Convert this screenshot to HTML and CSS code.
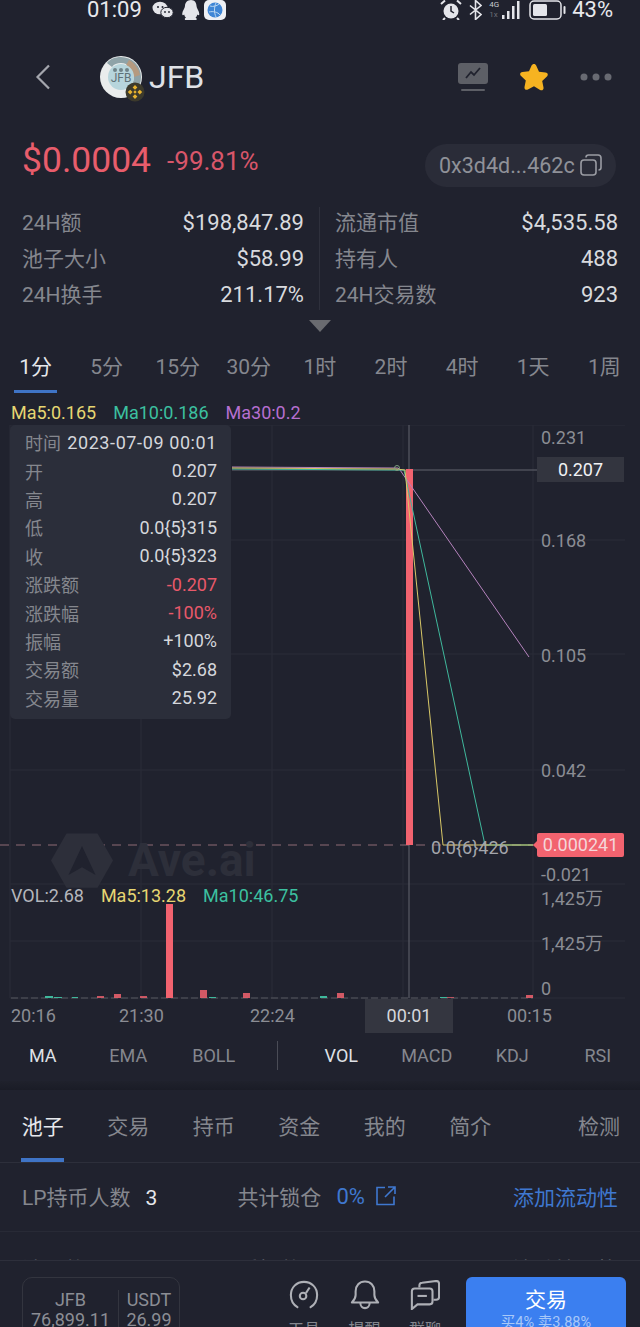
FILE: index.html
```html
<!DOCTYPE html>
<html lang="zh">
<head>
<meta charset="utf-8">
<title>JFB</title>
<link rel="stylesheet" href="styles.css">
</head>
<body>
<div class="page">
  <header class="status">
    <div class="status-left">
      <span class="clock">01:09</span>
      <svg class="st-wechat" width="22" height="18" viewBox="0 0 22 18"><ellipse cx="8" cy="7" rx="7.500" ry="6.300" fill="#e4e5ea"/><ellipse cx="15" cy="11.500" rx="6.200" ry="5.200" fill="#e4e5ea" stroke="#20222e"/><circle cx="6" cy="6" r="1" fill="#20222e"/><circle cx="10.500" cy="6" r="1" fill="#20222e"/><circle cx="13" cy="11" r=".9" fill="#20222e"/><circle cx="17" cy="11" r=".9" fill="#20222e"/></svg>
      <svg class="st-qq" width="22" height="20" viewBox="0 0 22 20"><path d="M11 0c3.800 0 5.500 2.800 5.500 6 0 2 2.800 5 2.800 8 0 1.500-1 1.500-2 .5-.3 1.500-1 2.500-1.800 3 1 .5 1.500 1 1 2.500H5c-.5-1.500 0-2 1-2.500-.8-.5-1.500-1.500-1.800-3-1 1-2 1-2-.5 0-3 2.800-6 2.800-8C5 2.800 7.200 0 11 0z" fill="#e4e5ea"/></svg>
      <svg class="st-globe" width="22" height="20" viewBox="0 0 22 20"><rect width="22" height="20" rx="5" fill="#eef0f4"/><circle cx="11" cy="10" r="7.500" fill="#3f86d6"/><path d="M6 6c3 1 7 0 9-2M5 12c4-1 9 0 11 3M12 3c-2 4-2 10 0 14" stroke="#bcd8f2" fill="none"/></svg>
    </div>
    <div class="status-right">
      <svg class="st-alarm" width="22" height="20" viewBox="0 0 22 20"><circle cx="11" cy="11" r="7.500" fill="#e4e5ea"/><path d="M11 6v5l3 2" stroke="#20222e" stroke-width="1.500" fill="none"/><path d="M1 4l4-3.500M21 4l-4-3.500M5 18l-2 2M17 18l2 2" stroke="#e4e5ea" stroke-width="2"/></svg>
      <svg class="st-bt" width="13" height="20" viewBox="0 0 13 20"><path d="M1 5.500l11 9-5.500 5V.5l5.500 5-11 9" stroke="#e4e5ea" stroke-width="1.600" fill="none"/></svg>
      <div class="net"><span class="net-top">4G</span><span class="net-low">1x</span></div>
      <svg class="st-bars" width="18" height="20" viewBox="0 0 18 20"><g fill="#e4e5ea"><rect x="0" y="15" width="2.500" height="4"/><rect x="5" y="11" width="2.500" height="8"/><rect x="10" y="6" width="2.500" height="13"/><rect x="15" y="1" width="2.500" height="18"/></g></svg>
      <svg class="st-batt" width="37" height="20" viewBox="0 0 37 20"><rect x="1" y="1" width="31" height="18" rx="4" fill="none" stroke="#e4e5ea" stroke-width="1.500"/><rect x="4" y="4" width="14" height="12" rx="1.500" fill="#e4e5ea"/><rect x="34.500" y="6" width="2" height="8" rx="1" fill="#e4e5ea"/></svg>
      <span class="clock">43%</span>
    </div>
  </header>

  <nav class="nav">
    <svg class="back" width="16" height="26" viewBox="0 0 16 26"><path d="M14 1.500L2.500 13 14 24.500" fill="none" stroke="#a4a6ad" stroke-width="2.200"/></svg>
    <div class="logo">
      <svg width="44" height="44" viewBox="0 0 44 44"><circle cx="22" cy="22" r="21" fill="#e9ecec"/><path d="M22 2a20 20 0 0 1 20 20c0 6-2 11-6 15l-5-6c3-3 4-6 4-10 0-8-6-13-13-13-4 0-7 1-9 4l-5-4c3-4 8-6 14-6z" fill="#8fa3a8"/><path d="M30 5c6 3 10 9 11 15l-6 2c-1-5-3-9-8-12z" fill="#b59a80"/><circle cx="22" cy="22" r="13" fill="#b7d5dc"/><text class="logo-text" x="22" y="27" text-anchor="middle">JFB</text><g fill="#6f8288"><circle cx="16" cy="15" r="2"/><circle cx="22" cy="15" r="2"/><circle cx="28" cy="15" r="2"/></g></svg>
      <svg class="chain" width="20" height="20" viewBox="0 0 20 20"><circle cx="10" cy="10" r="9.500" fill="#3c3a2c"/><path d="M10 3l2.400 2.400-2.400 2.400-2.400-2.400zM5.200 7.800L7.600 10l-2.400 2.400L2.800 10zM14.800 7.800l2.400 2.200-2.400 2.400-2.400-2.400zM10 12.200l2.400 2.400L10 17l-2.400-2.400zM10 8.300l1.700 1.700-1.700 1.700L8.300 10z" fill="#e8b32e"/></svg>
    </div>
    <span class="symbol">JFB</span>
    <div class="nav-actions">
      <svg width="30" height="30" viewBox="0 0 30 30"><rect x="0" y="1" width="30" height="21" rx="3" fill="#5d5f66"/><path d="M8 16l5-6 3 3 6-7" fill="none" stroke="#20222e" stroke-width="1.800"/><rect x="3" y="27" width="24" height="2" rx="1" fill="#5d5f66"/></svg>
      <svg width="32" height="30" viewBox="0 0 32 30"><path d="M16 2c1 0 1.800.6 2.300 1.700l2.700 6 6.500.8c2.500.3 3 2.500 1.400 4l-4.700 4.400 1.300 6.500c.4 2.300-1.500 3.500-3.400 2.500L16 24.200l-6.100 3.300c-1.900 1-3.800-.2-3.400-2.500l1.300-6.500-4.700-4.400c-1.600-1.500-1.100-3.700 1.400-4l6.500-.8 2.700-6C14.200 2.600 15 2 16 2z" fill="#f6b321"/></svg>
      <svg width="32" height="8" viewBox="0 0 32 8"><g fill="#686a72"><circle cx="4" cy="4" r="3.500"/><circle cx="16" cy="4" r="3.500"/><circle cx="28" cy="4" r="3.500"/></g></svg>
    </div>
  </nav>

  <section class="price-row">
    <span class="price">$0.0004</span>
    <span class="change">-99.81%</span>
    <div class="address">
      <span>0x3d4d...462c</span>
      <svg width="22" height="22" viewBox="0 0 22 22"><rect x="1" y="6" width="15" height="15" rx="3" fill="#2a2c38" stroke="#9a9ca3" stroke-width="1.600"/><path d="M6 3.500C6 2 7 1 8.500 1H18c1.700 0 3 1.300 3 3v9.500c0 1.500-1 2.500-2.500 2.500" fill="none" stroke="#9a9ca3" stroke-width="1.600"/></svg>
    </div>
  </section>

  <section class="stats">
    <div class="stats-col">
      <div class="stat"><span>24H额</span><b>$198,847.89</b></div>
      <div class="stat"><span>池子大小</span><b>$58.99</b></div>
      <div class="stat"><span>24H换手</span><b>211.17%</b></div>
    </div>
    <div class="stats-col stats-col-right">
      <div class="stat"><span>流通市值</span><b>$4,535.58</b></div>
      <div class="stat"><span>持有人</span><b>488</b></div>
      <div class="stat"><span>24H交易数</span><b>923</b></div>
    </div>
  </section>
  <div class="fold"></div>

  <div class="frames">
    <span class="frame frame-on">1分</span><span class="frame">5分</span><span class="frame">15分</span><span class="frame">30分</span><span class="frame">1时</span><span class="frame">2时</span><span class="frame">4时</span><span class="frame">1天</span><span class="frame">1周</span>
  </div>

  <div class="legend">
    <span class="c-yellow">Ma5:0.165</span>
    <span class="c-green">Ma10:0.186</span>
    <span class="c-purple">Ma30:0.2</span>
  </div>

  <div class="chart">
    <svg class="plot" width="640" height="610" viewBox="0 425 640 610">
      <!-- grid -->
      <g stroke="#2b2d39" stroke-width="1" fill="none">
        <path d="M10 425H625M10 540H625M10 654H625M10 770H625M10 884H625M10 941H625M10 998H625"/>
        <path d="M10 425V998M141 425V998M272 425V998M403 425V998M533 425V998"/>
      </g>
      <!-- crosshair and last price -->
      <path d="M409 425V998M232 470H537" stroke="#63656e" stroke-width="1" fill="none"/>
      <path d="M0 845H537" stroke="#8e6a75" stroke-width="1" stroke-dasharray="9 7" fill="none"/>
      <!-- candle -->
      <rect x="406" y="469" width="7" height="376" fill="#f2636f"/>
      <!-- moving averages -->
      <path d="M232 467L398 468L400 470L529 657" stroke="#b583bd" fill="none"/>
      <path d="M232 469L394 470L404 470L485 845L533 845" stroke="#3fb89c" fill="none"/>
      <path d="M232 468L396 469L405 470L443 845L533 845" stroke="#d8c868" fill="none"/>
      <circle cx="397" cy="468" r="2.500" fill="none" stroke="#7d9d80"/>
      <!-- volume -->
      <path d="M11 998H533" stroke="#565861" stroke-width="1" stroke-dasharray="7 3" fill="none"/>
      <g fill="#f2636f">
        <rect x="166" y="904" width="7" height="94"/>
        <rect x="97" y="996" width="7" height="2" opacity=".8"/>
        <rect x="114" y="994" width="7" height="4" opacity=".85"/>
        <rect x="140" y="996" width="7" height="2" opacity=".8"/>
        <rect x="200" y="990" width="7" height="8" opacity=".85"/>
        <rect x="243" y="993" width="7" height="5" opacity=".85"/>
        <rect x="337" y="993" width="7" height="5" opacity=".85"/>
        <rect x="447" y="997" width="7" height="1" opacity=".7"/>
        <rect x="526" y="995" width="7" height="3" opacity=".85"/>
      </g>
      <g fill="#3fb89c">
        <rect x="45" y="996" width="8" height="2"/>
        <rect x="54" y="997" width="8" height="1"/>
        <rect x="72" y="997" width="6" height="1"/>
        <rect x="209" y="997" width="7" height="1"/>
        <rect x="320" y="996" width="7" height="2"/>
        <rect x="440" y="997" width="7" height="1"/>
      </g>
    </svg>

    <div class="watermark">
      <svg width="62" height="57" viewBox="0 0 64 58"><path d="M16 1h32l16 28-16 28H16L0 29z" fill="#2d2f3a"/><path d="M32 14l14 30-14-8-14 8z" fill="#20222e"/></svg>
      <span>Ave.ai</span>
    </div>

    <span class="axis axis-a">0.231</span>
    <span class="axis axis-b">0.168</span>
    <span class="axis axis-c">0.105</span>
    <span class="axis axis-d">0.042</span>
    <span class="axis axis-e">-0.021</span>
    <span class="axis axis-f">1,425万</span>
    <span class="axis axis-g">1,425万</span>
    <span class="axis axis-h">0</span>
    <span class="tag tag-cross">0.207</span>
    <span class="tag tag-last">0.000241</span>
    <span class="low-mark">0.0{6}426</span>

    <div class="vol-legend">
      <span class="c-gray">VOL:2.68</span>
      <span class="c-yellow">Ma5:13.28</span>
      <span class="c-green">Ma10:46.75</span>
    </div>

    <span class="tick tick-a">20:16</span>
    <span class="tick tick-b">21:30</span>
    <span class="tick tick-c">22:24</span>
    <span class="tick tick-now">00:01</span>
    <span class="tick tick-e">00:15</span>

    <div class="tooltip">
      <div class="tip-row"><span>时间</span><b class="tip-date">2023-07-09 00:01</b></div>
      <div class="tip-row"><span>开</span><b>0.207</b></div>
      <div class="tip-row"><span>高</span><b>0.207</b></div>
      <div class="tip-row"><span>低</span><b>0.0{5}315</b></div>
      <div class="tip-row"><span>收</span><b>0.0{5}323</b></div>
      <div class="tip-row"><span>涨跌额</span><b class="c-red">-0.207</b></div>
      <div class="tip-row"><span>涨跌幅</span><b class="c-red">-100%</b></div>
      <div class="tip-row"><span>振幅</span><b>+100%</b></div>
      <div class="tip-row"><span>交易额</span><b>$2.68</b></div>
      <div class="tip-row"><span>交易量</span><b>25.92</b></div>
    </div>
  </div>

  <div class="indicators">
    <span class="ind ind-on">MA</span><span class="ind">EMA</span><span class="ind">BOLL</span>
    <i class="ind-sep"></i>
    <span class="ind ind-on">VOL</span><span class="ind">MACD</span><span class="ind">KDJ</span><span class="ind">RSI</span>
  </div>

  <div class="band"></div>

  <div class="tabs">
    <span class="tab tab-on">池子</span><span class="tab">交易</span><span class="tab">持币</span><span class="tab">资金</span><span class="tab">我的</span><span class="tab">简介</span>
    <span class="tab tab-end">检测</span>
  </div>

  <div class="lp-row">
    <span class="lp-a">LP持币人数<b>3</b></span>
    <span class="lp-b">共计锁仓<em>0%</em>
      <svg width="20" height="20" viewBox="0 0 20 20"><path d="M9 1.500H1v17h17v-8" fill="none" stroke="#3f78d0" stroke-width="1.600"/><path d="M12 1h7v7M18.500 1.500L9 11" fill="none" stroke="#3f78d0" stroke-width="1.600"/></svg>
    </span>
    <span class="lp-c">添加流动性</span>
  </div>
  <div class="lp-next">
    <span>池子数量</span><span>质押数量</span><span>流动性价格</span>
  </div>

  <footer class="dock">
    <div class="pair">
      <div class="pair-cell pair-main"><span>JFB</span><span>76,899.11</span></div>
      <div class="pair-cell"><span>USDT</span><span>26.99</span></div>
    </div>
    <div class="tools">
      <div class="tool">
        <svg width="30" height="30" viewBox="0 0 32 32"><path d="M9 29C4 26 2 21 2 16 2 8 8 2 16 2s14 6 14 14c0 5-2 10-7 13" fill="none" stroke="#aeb0b6" stroke-width="2.200" stroke-linecap="round"/><circle cx="15" cy="17" r="3.500" fill="none" stroke="#aeb0b6" stroke-width="2.200"/><path d="M18 14l4-6" stroke="#aeb0b6" stroke-width="2.200"/></svg>
        <span>工具</span>
      </div>
      <div class="tool">
        <svg width="30" height="30" viewBox="0 0 32 32"><path d="M2 24c2-2 4-4 4-8v-4C6 6 10 1.500 16 1.500S26 6 26 12v4c0 4 2 6 4 8z" fill="none" stroke="#aeb0b6" stroke-width="2.200" stroke-linejoin="round"/><path d="M11 24c0 8 10 8 10 0" fill="none" stroke="#aeb0b6" stroke-width="2.200"/></svg>
        <span>提醒</span>
      </div>
      <div class="tool">
        <svg width="30" height="30" viewBox="0 0 32 32"><path d="M10 8V6c0-2 1-3 3-3l15-2c2 0 3 1 3 3v14c0 2-1 3-3 3h-3" fill="none" stroke="#aeb0b6" stroke-width="2.200"/><path d="M5 9h16c2 0 3 1 3 3v11c0 2-1 3-3 3H8l-6 5V12c0-2 1-3 3-3z" fill="#20222e" stroke="#aeb0b6" stroke-width="2.200"/><path d="M8 17h10" stroke="#aeb0b6" stroke-width="2.200"/></svg>
        <span>群聊</span>
      </div>
    </div>
    <div class="trade"><b>交易</b><span>买4% 卖3.88%</span></div>
  </footer>
</div>
</body>
</html>
```

FILE: styles.css
```css
* { box-sizing: border-box; }
html, body { margin: 0; padding: 0; }
body {
  background: #20222e;
  color: #d5d7dc;
  font-family: Roboto, "Noto Sans CJK SC", sans-serif;
}
.page {
  position: relative;
  width: 640px;
  height: 1327px;
  overflow: hidden;
}
b, em { font-weight: 400; font-style: normal; }

/* status bar */
.status {
  height: 20px;
  display: flex;
  justify-content: space-between;
  align-items: center;
  padding: 0 27px 0 87px;
  color: #e8e9ed;
}
.status-left, .status-right { display: flex; align-items: center; }
.clock { font-size: 22px; line-height: 20px; }
.status-left .clock { margin-right: 10px; }
.st-qq { margin-left: 6px; }
.st-globe { margin-left: 2px; }
.st-bt { margin-left: 7px; }
.net {
  display: flex;
  flex-direction: column;
  margin-left: 7px;
  width: 13px;
  font-size: 8px;
  line-height: 10px;
}
.net-top { color: #c8cad0; }
.net-low { color: #6c6e76; }
.st-batt { margin-left: 9px; }
.status-right .clock { margin-left: 6px; }

/* title bar */
.nav {
  height: 58px;
  margin-top: 28px;
  display: flex;
  align-items: center;
  padding: 0 28px 0 35px;
}
.back { margin-right: 48px; }
.logo { position: relative; width: 44px; height: 44px; margin-right: 6px; }
.logo-text { font-size: 12px; fill: #5f7278; }
.chain { position: absolute; right: -2px; bottom: -3px; }
.symbol { font-size: 32px; line-height: 40px; color: #dfe1e6; }
.nav-actions { margin-left: auto; display: flex; align-items: center; gap: 30px; }

/* price */
.price-row {
  height: 44px;
  margin-top: 37px;
  display: flex;
  align-items: center;
  padding: 0 24px 0 22px;
}
.price { font-size: 35.500px; color: #e85d6c; margin: 0 16px 10px 0; }
.change { font-size: 26px; color: #d8566a; margin-bottom: 8px; }
.address {
  margin-left: auto;
  height: 43px;
  width: 191px;
  border-radius: 22px;
  background: #2a2c38;
  display: flex;
  align-items: center;
  gap: 5px;
  padding-left: 14px;
  font-size: 21.500px;
  color: #8f9198;
}

/* token stats */
.stats {
  display: flex;
  height: 108px;
  margin-top: 18px;
  padding: 0 22px;
  position: relative;
}
.stats-col { width: 282px; }
.stats-col-right { margin-left: 31px; width: 283px; }
.stats-col-right::before {
  content: "";
  position: absolute;
  left: 319px;
  top: 2px;
  bottom: 3px;
  width: 1px;
  background: #2e303c;
}
.stat {
  display: flex;
  justify-content: space-between;
  height: 36px;
  line-height: 36px;
  font-size: 21px;
}
.stat span { color: #85878e; }
.stat b { color: #d8dade; font-size: 22px; }
.fold {
  width: 0;
  height: 0;
  margin: 7px auto 0;
  border-left: 11.500px solid transparent;
  border-right: 11.500px solid transparent;
  border-top: 12px solid #6a6b70;
}

/* timeframe selector */
.frames {
  display: flex;
  height: 47px;
  margin-top: 13px;
}
.frame {
  flex: 0 0 71.100px;
  text-align: center;
  font-size: 21px;
  line-height: 44px;
  color: #85878e;
  position: relative;
}
.frame-on { color: #e6e8ec; }
.frame-on::after {
  content: "";
  position: absolute;
  left: 14px;
  top: 45px;
  width: 43px;
  height: 3px;
  background: #3f74c6;
}

/* moving average legend */
.legend {
  display: flex;
  gap: 17px;
  height: 27px;
  margin-top: 6px;
  padding-left: 11px;
  font-size: 18px;
  line-height: 30px;
}
.c-yellow { color: #e6d672; }
.c-green { color: #3cc0a0; }
.c-purple { color: #b66fd0; }
.c-gray { color: #b4b6bc; }
.c-red { color: #e8596a; }

/* chart canvas */
.chart { position: relative; width: 640px; height: 610px; }
.plot { position: absolute; left: 0; top: 0; }
.watermark {
  position: absolute;
  left: 51px;
  top: 407px;
  display: flex;
  align-items: center;
  gap: 15px;
  font-size: 46px;
  line-height: 57px;
  font-weight: 700;
  color: #2d2f3a;
}
.axis { position: absolute; left: 541px; font-size: 18px; line-height: 20px; color: #8b8d94; }
.axis-a { top: 3px; }
.axis-b { top: 106px; }
.axis-c { top: 221px; }
.axis-d { top: 336px; }
.axis-e { top: 440px; }
.axis-f { top: 464px; }
.axis-g { top: 509px; }
.axis-h { top: 554px; }
.tag {
  position: absolute;
  left: 537px;
  width: 87px;
  text-align: center;
  font-size: 18px;
}
.tag-cross { top: 32px; height: 25px; line-height: 25px; background: #33353f; color: #f0f1f4; }
.tag-last { top: 408px; height: 24px; line-height: 24px; background: #f2636f; color: #f4d6da; border-radius: 2px; }
.tag-last::before {
  content: "";
  position: absolute;
  left: -4px;
  top: 8px;
  border-top: 4px solid transparent;
  border-bottom: 4px solid transparent;
  border-right: 4px solid #f2636f;
}
.low-mark { position: absolute; left: 431px; top: 413px; font-size: 18px; line-height: 20px; color: #a4a6ac; }
.vol-legend {
  position: absolute;
  left: 11px;
  top: 461px;
  display: flex;
  gap: 17px;
  font-size: 18px;
  line-height: 20px;
}
.tick { position: absolute; top: 581px; font-size: 18px; line-height: 20px; color: #8b8d94; }
.tick-a { left: 11px; }
.tick-b { left: 119px; }
.tick-c { left: 250px; }
.tick-e { left: 507px; }
.tick-now {
  left: 365px;
  top: 574px;
  width: 88px;
  height: 34px;
  line-height: 34px;
  text-align: center;
  background: #343640;
  color: #d5d7dc;
}

/* crosshair readout */
.tooltip {
  position: absolute;
  left: 10px;
  top: 0;
  width: 221px;
  height: 294px;
  padding: 3px 14px 6px 15px;
  background: #2b2e3a;
  border-radius: 5px;
  display: flex;
  flex-direction: column;
}
.tip-row {
  flex: 0 0 28.400px;
  display: flex;
  justify-content: space-between;
  align-items: center;
  font-size: 18px;
}
.tip-row span { color: #85878e; }
.tip-row b { color: #d5d7dc; }
.tip-row b.c-red { color: #e8596a; }
.tip-row .tip-date { letter-spacing: .6px; }

/* indicator switcher */
.indicators {
  display: flex;
  align-items: center;
  height: 32px;
  margin-top: 4px;
}
.ind { flex: 0 0 85.500px; text-align: center; font-size: 18px; color: #85878e; }
.ind-on { color: #dfe1e6; }
.ind-sep { flex: 0 0 42px; height: 29px; position: relative; }
.ind-sep::before {
  content: "";
  position: absolute;
  left: 20.500px;
  top: 0;
  width: 1px;
  height: 29px;
  background: #4a4c56;
}

.band {
  height: 9px;
  margin-top: 10px;
  background: linear-gradient(#1f212c, #1a1c26);
}

/* detail tabs */
.tabs {
  display: flex;
  height: 73px;
  border-bottom: 1px solid #2d2f3b;
  position: relative;
}
.tab {
  flex: 0 0 85.500px;
  text-align: center;
  font-size: 21px;
  line-height: 74px;
  color: #85878e;
  position: relative;
}
.tab-on { color: #e6e8ec; }
.tab-on::after {
  content: "";
  position: absolute;
  left: 21px;
  bottom: 0;
  width: 43px;
  height: 4px;
  background: #3f74c6;
}
.tab-end { margin-left: auto; flex: 0 0 auto; padding-right: 20px; }

/* pool summary */
.lp-row {
  display: flex;
  align-items: center;
  height: 69px;
  padding: 0 22px 2px;
  font-size: 21px;
  color: #85878e;
  border-bottom: 1px solid #282a36;
}
.lp-a b { color: #e6e8ec; margin-left: 15px; }
.lp-b { display: flex; align-items: center; margin-left: 80px; }
.lp-b em { color: #3f78d0; font-size: 22px; margin: 0 11px 0 15px; }
.lp-c { margin-left: auto; color: #3f78d0; }
.lp-next {
  display: flex;
  padding: 21px 22px 0;
  font-size: 21px;
  color: #6f7178;
}
.lp-next span:nth-child(2) { margin-left: 132px; }
.lp-next span:nth-child(3) { margin-left: auto; }

/* bottom dock */
.dock {
  position: absolute;
  left: 0;
  right: 0;
  bottom: 0;
  height: 67px;
  background: #20222e;
  border-top: 1px solid #2d2f3b;
  display: flex;
  padding: 16px 14px 0 22px;
}
.pair {
  display: flex;
  width: 158px;
  height: 70px;
  border: 1px solid #33353f;
  border-radius: 10px;
  padding-top: 12px;
  font-size: 18px;
  line-height: 20px;
  color: #8b8d94;
}
.pair-cell {
  display: flex;
  flex-direction: column;
  align-items: center;
  white-space: nowrap;
}
.pair-main { width: 96px; border-right: 1px solid #33353f; }
.pair-cell:last-child { width: 60px; }
.tools { display: flex; margin-left: 108px; gap: 28.500px; margin-top: 3px; }
.tool {
  display: flex;
  flex-direction: column;
  align-items: center;
  width: 32px;
  font-size: 16px;
  line-height: 20px;
  color: #85878e;
  white-space: nowrap;
}
.tool svg { flex: none; }
.tool span { margin-top: 10px; }
.trade {
  margin-left: 25px;
  width: 160px;
  height: 66px;
  border-radius: 6px;
  background: #3b7ff0;
  display: flex;
  flex-direction: column;
  align-items: center;
  padding-top: 9px;
}
.trade b { font-size: 21px; line-height: 28px; color: #fff; }
.trade span { font-size: 14.500px; line-height: 18px; color: #a8c8f8; }
```
